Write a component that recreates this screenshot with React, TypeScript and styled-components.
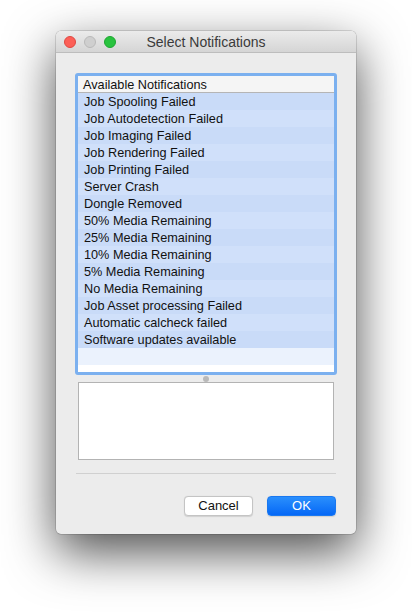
import React from "react";
import styled, { createGlobalStyle } from "styled-components";

const notifications = [
  "Job Spooling Failed",
  "Job Autodetection Failed",
  "Job Imaging Failed",
  "Job Rendering Failed",
  "Job Printing Failed",
  "Server Crash",
  "Dongle Removed",
  "50% Media Remaining",
  "25% Media Remaining",
  "10% Media Remaining",
  "5% Media Remaining",
  "No Media Remaining",
  "Job Asset processing Failed",
  "Automatic calcheck failed",
  "Software updates available",
];

export default function App() {
  return (
    <>
      <GlobalStyle />
      <Desktop>
        <Window>
          <TitleBar>
            <Lights>
              <Light color="#fc5f57" edge="#de4841" />
              <Light color="#cfcfcf" edge="#b9b9b9" />
              <Light color="#29c33f" edge="#1ea631" />
            </Lights>
            <Title>Select Notifications</Title>
          </TitleBar>
          <Content>
            <ListBox>
              <ListHeader>Available Notifications</ListHeader>
              {notifications.map((n, i) => (
                <Row key={n} odd={i % 2 === 1}>
                  {n}
                </Row>
              ))}
              <EmptyRow />
            </ListBox>
            <Splitter>
              <Dot />
            </Splitter>
            <Details />
            <Separator />
            <Buttons>
              <Button>Cancel</Button>
              <Button primary>OK</Button>
            </Buttons>
          </Content>
        </Window>
      </Desktop>
    </>
  );
}

// ---------- Styled Components ----------

const GlobalStyle = createGlobalStyle`
  html, body {
    margin: 0;
    padding: 0;
    background: #ffffff;
  }
  body {
    font-family: "Liberation Sans", Arial, sans-serif;
  }
`;

const Desktop = styled.div`
  min-height: 615px;
  padding: 31px 0 0 56px;
  box-sizing: border-box;
  background: #ffffff;
`;

const Window = styled.div`
  width: 300px;
  border-radius: 5px;
  background: #ececec;
  overflow: hidden;
  box-shadow: 0 0 0 0.5px rgba(0, 0, 0, 0.25), 0 18px 50px rgba(0, 0, 0, 0.7);
`;

const TitleBar = styled.div`
  position: relative;
  height: 22px;
  box-sizing: border-box;
  display: flex;
  align-items: center;
  justify-content: center;
  background: linear-gradient(to bottom, #ebebeb, #d5d5d5);
  border-bottom: 1px solid #bdbdbd;
`;

const Lights = styled.div`
  position: absolute;
  left: 8px;
  top: 5px;
  display: flex;
  gap: 8px;
`;

const Light = styled.span<{ color: string; edge: string }>`
  width: 12px;
  height: 12px;
  box-sizing: border-box;
  border-radius: 50%;
  background: ${({ color }) => color};
  border: 0.5px solid ${({ edge }) => edge};
`;

const Title = styled.div`
  font-size: 14px;
  padding-top: 1px;
  color: #3a3a3a;
`;

const Content = styled.div`
  display: flex;
  flex-direction: column;
  padding: 20px 19px 18px 19px;
`;

const ListBox = styled.div`
  height: 302px;
  box-sizing: border-box;
  border: 3px solid #7bb0ef;
  border-radius: 3px;
  background: #ffffff;
  font-size: 12.7px;
  color: #111;
  overflow: hidden;
`;

const ListHeader = styled.div`
  height: 16px;
  line-height: 18px;
  padding-left: 5px;
  background: #f5f5f5;
  border-bottom: 1px solid #b5b5b5;
`;

const Row = styled.div<{ odd: boolean }>`
  height: 17px;
  line-height: 19px;
  padding-left: 6px;
  background: ${({ odd }) => (odd ? "#d0e0fa" : "#c9dbf8")};
`;

const EmptyRow = styled.div`
  height: 17px;
  background: #ebf2fd;
`;

const Splitter = styled.div`
  height: 7px;
  display: flex;
  align-items: center;
  justify-content: center;
`;

const Dot = styled.span`
  width: 6px;
  height: 6px;
  border-radius: 50%;
  background: #b9b9b9;
`;

const Details = styled.div`
  height: 78px;
  margin: 0 3px;
  box-sizing: border-box;
  background: #ffffff;
  border: 1px solid #b3b3b3;
`;

const Separator = styled.div`
  height: 1px;
  margin: 13px 1px 0 1px;
  background: #d0d0d0;
`;

const Buttons = styled.div`
  display: flex;
  justify-content: flex-end;
  gap: 14px;
  margin-top: 22px;
  padding-right: 1px;
`;

const Button = styled.button<{ primary?: boolean }>`
  width: 69px;
  height: 20px;
  box-sizing: border-box;
  padding: 0;
  border-radius: 4px;
  font-family: "Liberation Sans", Arial, sans-serif;
  font-size: 13px;
  line-height: 18px;
  cursor: pointer;
  border: ${({ primary }) => (primary ? "1px solid #1a78f0" : "1px solid #c4c4c4")};
  color: ${({ primary }) => (primary ? "#ffffff" : "#111111")};
  background: ${({ primary }) =>
    primary ? "linear-gradient(to bottom, #2a8ffd, #0568f6)" : "#ffffff"};
  box-shadow: 0 0.5px 1px rgba(0, 0, 0, 0.12);
`;
